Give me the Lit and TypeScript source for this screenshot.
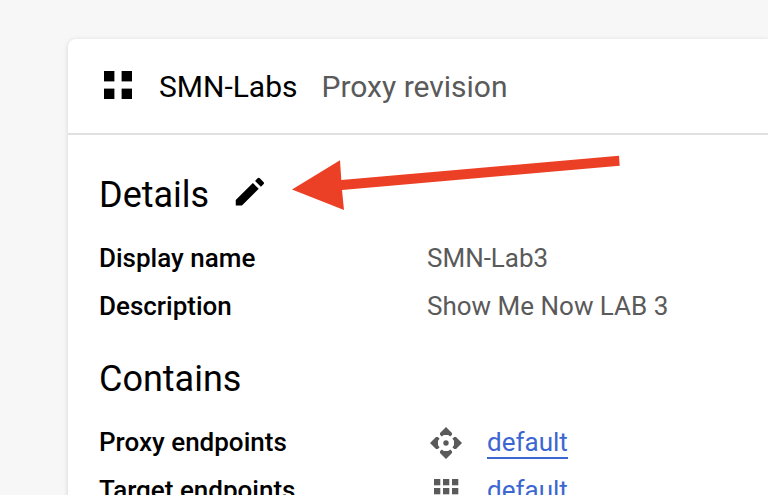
import { LitElement, html, css, svg } from "lit";
import { customElement } from "lit/decorators.js";

const gridIcon = html`<svg class="grid-icon" width="28" height="28" viewBox="0 0 28 28">
  ${[0, 17.6].map((y) => [0, 17.6].map((x) => svg`<rect x=${x} y=${y} width="10.4" height="10.4" />`))}
</svg>`;

const pencilIcon = html`<svg class="pencil" width="38" height="38" viewBox="0 0 24 24">
  <path d="M3 17V20.6h3.9L17.5 10 13.8 6.3zM20.5 7.1a1 1 0 0 0 0-1.41l-2.3-2.3a1 1 0 0 0-1.41 0L15.2 5l3.7 3.7z" />
</svg>`;

const endpointIcon = html`<svg width="32" height="32" viewBox="0 0 32 32">
  ${[0, 90, 180, 270].map(
    (a) => svg`<path transform="rotate(${a} 16 16)" d="M16 0 22 6V7.8L20.2 9.6 18.2 8H13.8L11.8 9.6 10 7.8V6z" />`
  )}
  <circle cx="16" cy="16" r="2.7" />
</svg>`;

const appsIcon = html`<svg width="32" height="32" viewBox="0 0 32 32">
  ${[4, 13, 22].map((y) => [4, 13, 22].map((x) => svg`<rect x=${x} y=${y} width="6.3" height="6.3" />`))}
</svg>`;

@customElement("app-root")
export class AppRoot extends LitElement {
  static styles = css`
    :host {
      display: block;
      position: relative;
      height: 495px;
      overflow: hidden;
      box-sizing: border-box;
      padding: 39px 0 0 68px;
      background: #f7f7f7;
      font-family: Roboto, sans-serif;
      color: #000;
    }
    svg { display: block; flex: none; }
    .card {
      height: 600px;
      background: #fff;
      border-radius: 8px 0 0 0;
      box-shadow: 0 1px 5px rgba(0, 0, 0, 0.15);
    }
    header {
      display: flex;
      align-items: center;
      box-sizing: border-box;
      height: 96px;
      padding: 0 0 0 36px;
      border-bottom: 2px solid #e0e0e0;
      font-size: 30px;
      white-space: nowrap;
    }
    .grid-icon { margin: -2px 27px 0 0; }
    .kind { margin-left: 24px; color: #5a5a5a; }
    .body { padding: 30px 0 0 31px; }
    h2 {
      display: flex;
      align-items: center;
      height: 60px;
      margin: 0 0 9px;
      font-size: 36px;
      font-weight: 400;
    }
    .pencil { margin: -7px 0 0 22px; }
    .row {
      display: grid;
      grid-template-columns: 328px auto;
      align-items: center;
      height: 48px;
      font-size: 26px;
      white-space: nowrap;
    }
    .label { font-weight: 500; }
    .value { display: flex; align-items: center; color: #5a5a5a; fill: #5a5a5a; }
    section + section { margin-top: 19px; }
    .linked { gap: 25px; padding: 2px 0 0 3px; }
    a { color: #3c67d0; line-height: 30px; border-bottom: 2px solid; }
    .arrow { position: absolute; left: 0; top: 0; fill: #ec4026; }
  `;

  render() {
    return html`
      <main class="card">
        <header>${gridIcon}<span>SMN-Labs</span><span class="kind">Proxy revision</span></header>
        <div class="body">
          <section>
            <h2>Details${pencilIcon}</h2>
            <div class="row"><span class="label">Display name</span><span class="value">SMN-Lab3</span></div>
            <div class="row"><span class="label">Description</span><span class="value">Show Me Now LAB 3</span></div>
          </section>
          <section>
            <h2>Contains</h2>
            <div class="row"><span class="label">Proxy endpoints</span><span class="value linked">${endpointIcon}<a>default</a></span></div>
            <div class="row"><span class="label">Target endpoints</span><span class="value linked">${appsIcon}<a>default</a></span></div>
          </section>
        </div>
      </main>
      <svg class="arrow" width="768" height="495" viewBox="0 0 768 495">
        <path d="M292 189.5 340 160.3 341.3 180 619 155.7 619.7 165.7 342 190 344 210z" />
      </svg>
    `;
  }
}
